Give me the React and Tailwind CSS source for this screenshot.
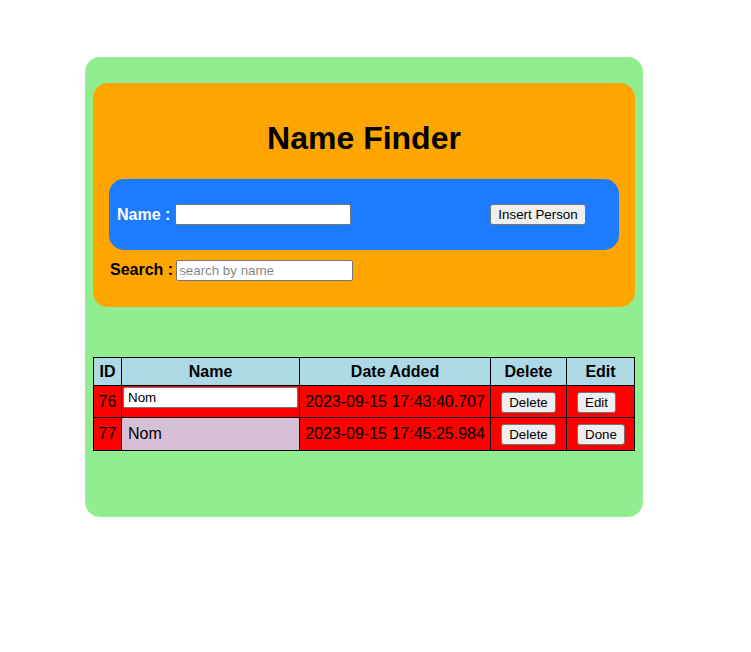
const people = [
  { id: 76, name: "Nom", date: "2023-09-15 17:43:40.707", editing: true },
  { id: 77, name: "Nom", date: "2023-09-15 17:45:25.984", editing: false },
];

const btn =
  "bg-[#efefef] border border-[#767676] rounded-[3px] px-[7px] h-[21px] text-[13.33px] leading-none text-black";

const input =
  "bg-white border border-[#767676] rounded-[2px] px-[2px] h-[21px] text-[13.33px] outline-none";

export default function App() {
  return (
    <div className="font-['Liberation_Sans',Arial,sans-serif] text-black bg-white min-h-[652px] pt-[57px]">
      <div className="ml-[85px] w-[558px] h-[460px] bg-[#90ee90] rounded-[15px] px-[8px] pt-[26px]">
        {/* header card */}
        <div className="bg-[#ffa500] rounded-[15px] h-[224px] px-[16px] pt-[37px]">
          <h1 className="text-[32px] leading-[37px] font-bold text-center">Name Finder</h1>

          <div className="mt-[22px] h-[71px] bg-[#1c7bff] rounded-[15px] pl-[8px] flex items-center">
            <span className="text-white font-bold text-[16px]">Name :</span>
            <input className={input + " ml-[5px] w-[176px]"} />
            <button className={btn + " ml-[139px]"}>Insert Person</button>
          </div>

          <div className="mt-[8px] pl-[1px] flex items-center">
            <span className="font-bold text-[16px]">Search :</span>
            <input className={input + " ml-[3px] w-[177px]"} placeholder="search by name" />
          </div>
        </div>

        {/* people table */}
        <table className="mt-[50px] w-full border-collapse text-[16px]">
          <thead>
            <tr className="h-[28px]">
              <th className="w-[28px] bg-[#add8e6] border border-black rounded-tl-[6px] p-0">ID</th>
              <th className="w-[178px] bg-[#add8e6] border border-black p-0">Name</th>
              <th className="w-[191px] bg-[#add8e6] border border-black p-0">Date Added</th>
              <th className="w-[76px] bg-[#add8e6] border border-black p-0">Delete</th>
              <th className="bg-[#add8e6] border border-black rounded-tr-[6px] p-0">Edit</th>
            </tr>
          </thead>
          <tbody>
            {people.map((p, i) => (
              <tr key={p.id} className={i === 0 ? "h-[32px]" : "h-[33px]"}>
                <td className="bg-[#ff0000] border border-black text-center p-0">{p.id}</td>
                {p.editing ? (
                  <td className="bg-[#ff0000] border border-black align-top p-[1px]">
                    <input className={input + " w-full block pl-[4px]"} defaultValue={p.name} />
                  </td>
                ) : (
                  <td className="bg-[#d8bfd8] border border-black p-0 pl-[6px]">{p.name}</td>
                )}
                <td className="bg-[#ff0000] border border-black text-center p-0">{p.date}</td>
                <td className="bg-[#ff0000] border border-black text-center p-0">
                  <button className={btn + (i === 1 ? " bg-[#e5e5e5]" : "")}>Delete</button>
                </td>
                <td className="bg-[#ff0000] border border-black p-0 pl-[10px]">
                  <button className={btn}>{p.editing ? "Edit" : "Done"}</button>
                </td>
              </tr>
            ))}
          </tbody>
        </table>
      </div>
    </div>
  );
}
